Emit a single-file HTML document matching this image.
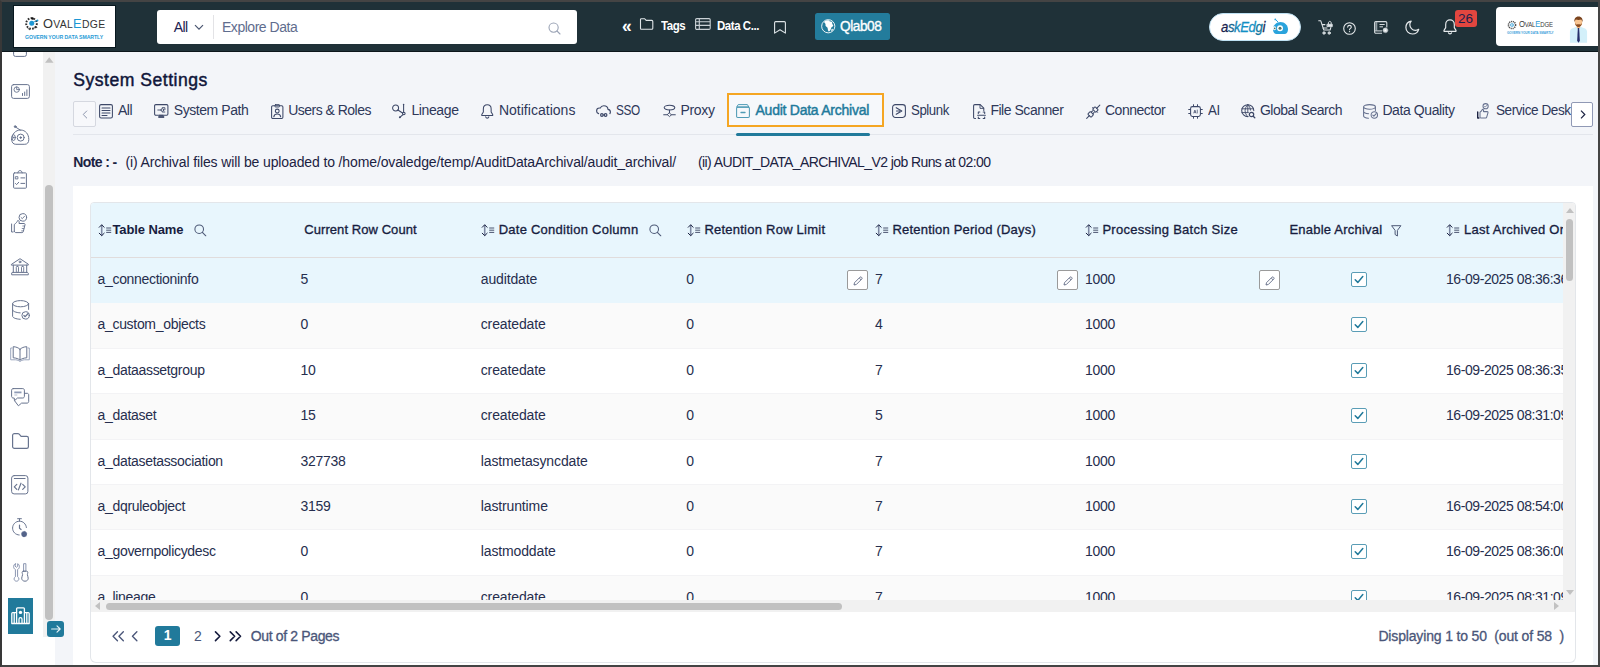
<!DOCTYPE html>
<html lang="en">
<head>
<meta charset="utf-8">
<title>System Settings - Audit Data Archival</title>
<style>
*{box-sizing:border-box;margin:0;padding:0}
html,body{width:1600px;height:667px;overflow:hidden}
body{position:relative;background:#f3f5f9;font-family:"Liberation Sans",sans-serif;color:#1b2242;font-size:13px}
svg{display:block;overflow:visible}
.abs{position:absolute}
.frame{position:absolute;left:0;top:0;width:1600px;height:667px;border:2px solid #444;border-left-color:#383838;z-index:50;pointer-events:none}
/* header */
.hdr{position:absolute;left:2px;top:2px;width:1596px;height:50px;background:#1f3138;border-bottom:1.5px solid #0c161b}
.logo{position:absolute;left:12px;top:4px;width:101px;height:41px;background:#fff;box-shadow:0 0 0 1px #07171e}
.search{position:absolute;left:155px;top:8px;width:420px;height:34px;background:#fff;border-radius:3px}
.hdr .t{position:absolute;white-space:nowrap;color:#fff}
.qlab{position:absolute;left:812.800px;top:11px;width:74.800px;height:27.300px;background:#237c9c;border-radius:2.500px}
.ask{position:absolute;left:1207px;top:11px;width:92px;height:27.600px;background:#fff;border-radius:14px;border:1px solid #bfe1f3}
.badge{position:absolute;left:1452.5px;top:8px;width:22px;height:17px;background:#e2463f;border-radius:3px;color:#1a1f4e;font-size:13.5px;text-align:center;line-height:17px}
.prof{position:absolute;left:1494px;top:5px;width:102px;height:39px;background:#fff;border-radius:4px 0 0 4px}
/* sidebar */
.side{position:absolute;left:2px;top:52px;width:53px;height:613px;background:#fff;overflow:hidden}
.sscroll{position:absolute;left:43px;top:52px;width:12px;height:585px;background:#f1f1f1}
.sthumb{position:absolute;left:2.200px;top:133px;width:7.800px;height:435px;background:#c1c1c1;border-radius:4px}
.sact{position:absolute;left:6px;top:545.5px;width:24.5px;height:36.5px;background:#217a9b}
.sarrow{position:absolute;left:47px;top:621px;width:16.5px;height:16px;background:#217a9b;border-radius:3px}
.ico{position:absolute}
/* main */
.h1{position:absolute;top:69px;font-size:17.600px;color:#10163a;white-space:nowrap;line-height:22px;-webkit-text-stroke:.45px #10163a}
.tabs{position:absolute;left:0;top:92px;width:1598px;height:44px}
.tab{position:absolute;top:10.250px;line-height:16px;font-size:14px;color:#2e3859;white-space:nowrap}
.tabbtn{position:absolute;width:22.5px;height:25.5px;border:1px solid #d5d8e0;border-radius:2px;background:#f7f8fb}
.note{position:absolute;top:154px;line-height:16px;font-size:14px;white-space:nowrap;color:#1b2242}
.card{position:absolute;left:73px;top:185.5px;width:1520px;height:490px;background:#fff}
.tbl{position:absolute;left:90px;top:202px;width:1486px;height:410.5px;border:1px solid #e3e6ea;border-radius:4px 4px 0 0;overflow:hidden;background:#fff}
.thead{position:absolute;left:0;top:0;width:1472px;height:54.5px;background:#e8f6fd;border-bottom:1px solid #e0dcdc}
.th{position:absolute;top:18.700px;line-height:16px;font-size:13px;font-weight:bold;color:#171d3f;white-space:nowrap}
.row{position:absolute;left:0;width:1472px;height:46px;border-bottom:1px solid #f3f3f5;background:#fff}
.row.alt{background:#fafafa}
.row.sel{background:#e8f6fd}
.row span{position:absolute;top:13.300px;line-height:16px;font-size:14px;letter-spacing:-.31px;color:#262e4e;white-space:nowrap}
.row.sel{border-bottom-color:#e8f6fd}
.row span.c3{letter-spacing:-.13px}.row span.dt{letter-spacing:-.43px}
.eb{position:absolute;top:12px;width:21px;height:20px;background:#fff;border:1px solid #9a9a9a;border-radius:2px}
.cb{position:absolute;left:1260px;top:14px;width:15.500px;height:15px;background:#fff;border:1.300px solid #5a9db6;border-radius:2px}
.pager{position:absolute;left:90px;top:612px;width:1486px;height:50.500px;border:1px solid #e3e6ea;border-top:none;border-radius:0 0 6px 6px;background:#fff}
.pg{position:absolute;top:16.200px;line-height:16px;font-size:14px;color:#4a5679;white-space:nowrap}
</style>
</head>
<body>
<!-- HEADER -->
<div class="hdr" id="hdr">
  <div class="logo">
    <svg class="abs" style="left:10.5px;top:9.5px" width="15" height="15" viewBox="0 0 30 30">
      <circle cx="13" cy="15" r="10.5" fill="none" stroke="#2b2b2b" stroke-width="4.2" stroke-dasharray="3.2 2.6"/>
      <circle cx="13" cy="15" r="8" fill="#fff"/>
      <path d="M5 24l5 4M21 20l3 3-7 1" stroke="#2b2b2b" stroke-width="1.6" fill="none"/>
      <circle cx="15" cy="5" r="2.4" fill="#111"/>
      <circle cx="13.5" cy="14.5" r="5" fill="#1c97d4"/>
      <path d="M17 12l7-3" stroke="#1c97d4" stroke-width="1.6"/>
      <circle cx="25" cy="9" r="1.8" fill="#1c97d4"/>
    </svg>
    <div class="abs" style="left:29px;top:9.800px;line-height:16px;white-space:nowrap;color:#333;font-size:10.400px;letter-spacing:.32px"><span style="font-size:12.800px">O</span>VAL<span style="font-size:12.800px;color:#1c97d4">E</span>DGE</div>
    <div class="abs fit" style="--x:11;--w:79;top:26.800px;line-height:8px;white-space:nowrap;color:#2a9bd6;font-size:5.200px;font-weight:bold;--c:1;left:11.00px;letter-spacing:-0.068px">GOVERN YOUR DATA SMARTLY</div>
  </div>
  <div class="search">
    <div class="abs fit" style="--x:16.700;--w:14.300;top:8.800px;line-height:16px;font-size:14px;color:#1b2050;--c:1;left:16.70px;letter-spacing:-0.574px">All</div>
    <svg class="abs" style="left:37px;top:14px" width="10" height="7" viewBox="0 0 10 7"><path d="M1 1.2l4 4 4-4" fill="none" stroke="#4a5570" stroke-width="1.2"/></svg>
    <div class="abs" style="left:55.5px;top:5px;width:1px;height:24px;background:#e3e3e6"></div>
    <div class="abs fit" style="--x:65.600;--w:75;top:8.800px;line-height:16px;font-size:14px;color:#5f6d8e;white-space:nowrap;--c:1;left:65.00px;letter-spacing:-0.468px">Explore Data</div>
    <svg class="abs" style="left:391px;top:12px" width="13" height="13" viewBox="0 0 13 13"><circle cx="5.6" cy="5.6" r="4.6" fill="none" stroke="#9aa3b5" stroke-width="1.1"/><path d="M9 9l3 3" stroke="#9aa3b5" stroke-width="1.1" stroke-linecap="round"/></svg>
  </div>
  <div class="t" style="left:620px;top:15.600px;font-size:17.500px;font-weight:bold;line-height:16px">«</div>
  <svg class="abs" style="left:637.5px;top:16px" width="14" height="12" viewBox="0 0 14 12"><path d="M1.2 0.7h3.4l1.6 1.7h5.6c.6 0 1 .4 1 1v6.9c0 .6-.4 1-1 1H1.2c-.4 0-.7-.3-.7-.7V1.400c0-.4.3-.7.7-.7z" fill="none" stroke="#dfe5e8" stroke-width="1.1"/></svg>
  <div class="t fit" style="--x:659;--w:25;top:16.800px;font-size:12px;font-weight:bold;line-height:14px;--c:1;left:659.00px;letter-spacing:-0.450px;transform:scaleX(0.9581);transform-origin:0 0">Tags</div>
  <svg class="abs" style="left:692.5px;top:16px" width="16" height="12" viewBox="0 0 16 12"><rect x=".6" y=".6" width="14.6" height="10.8" rx="1.2" fill="none" stroke="#c9d1d5" stroke-width="1.1"/><path d="M.6 3.700h14.600M.6 7.400h14.600M4.300 .6v10.800" stroke="#c9d1d5" stroke-width="1.1" fill="none"/></svg>
  <div class="t fit" style="--x:715;--w:42;top:16.800px;font-size:12px;font-weight:bold;line-height:14px;--c:1;left:715.00px;letter-spacing:-0.450px;transform:scaleX(0.9529);transform-origin:0 0">Data C...</div>
  <svg class="abs" style="left:772px;top:19px" width="12" height="13" viewBox="0 0 12 13"><path d="M1.7.6h8.600c.6 0 1.100.5 1.100 1.100v10.400L6 8.800.6 12.100V1.700C.6 1.100 1.100.6 1.700.6z" fill="none" stroke="#dfe5e8" stroke-width="1.100" stroke-linejoin="round"/></svg>
  <div class="qlab">
    <svg class="abs" style="left:6px;top:5.500px" width="14.500" height="14.500" viewBox="0 0 14.500 14.500"><circle cx="7.250" cy="7.250" r="6.600" fill="none" stroke="#fff" stroke-width=".9"/><path d="M3.600 2.300c1.300-.9 3-1.200 4.600-.9.500.3.300.9.900 1.200.7.300 1.500-.1 2 .5.400.6-.1 1.300.2 2 .3.600 1 .9.900 1.600-.2.900-1.300 1-1.800 1.700-.6.800-.4 1.900-1 2.700-.4.600-.9 1.300-1.500 1.300-.7 0-.8-.9-1-1.600-.2-.8-.1-1.600-.5-2.300-.4-.7-1.300-.9-1.700-1.600-.4-.700 0-1.500-.3-2.200-.3-.6-1-.8-1.200-1.400.1-.4.200-.7.400-1z" fill="#fff"/><path d="M10.900 9.800c.5-.2 1 .1 1 .600-.2.800-.7 1.500-1.300 2-.3-.3-.4-.8-.3-1.300.1-.5.200-1.100.6-1.300z" fill="#fff"/></svg>
    <div class="t fit" style="--x:25.500;--w:42;top:5.300px;font-size:14px;line-height:16px;-webkit-text-stroke:.35px #fff;--c:1;left:25.50px;letter-spacing:-0.450px;transform:scaleX(0.9743);transform-origin:0 0">Qlab08</div>
  </div>
  <div class="ask">
    <div class="abs fit" style="--x:10.600;--w:45;top:5px;font-size:14.500px;line-height:16px;font-style:italic;white-space:nowrap;-webkit-text-stroke:.3px currentColor;--c:1;left:10.60px;letter-spacing:-0.450px;transform:scaleX(0.9061);transform-origin:0 0"><span style="color:#1a1f4e">a</span><span style="color:#17668f">s</span><span style="color:#1485b5">k</span><span style="color:#1290c4">Ed</span><span style="color:#14789f">g</span><span style="color:#1d2a55">i</span></div>
    <svg class="abs" style="left:62px;top:3.500px" width="17" height="17" viewBox="0 0 17 17"><path d="M3.500 1.500l2.500 2.500" stroke="#2aa3dc" stroke-width="1" fill="none"/><circle cx="3.300" cy="1.400" r=".9" fill="#2aa3dc"/><path d="M1 11.500C1 7.400 4.300 4 8.500 4S16 7.400 16 11.500c0 2.500-1.500 4.500-3.500 4.500h-8C2.500 16 1 14 1 11.500z" fill="#2aa3dc"/><circle cx="8" cy="10.300" r="3" fill="#fff"/><circle cx="8" cy="10.300" r="1.500" fill="#4f7368"/><ellipse cx="2.500" cy="10.300" rx="1.600" ry="2" fill="#fff"/><circle cx="2.700" cy="10.300" r=".9" fill="#4f7368"/></svg>
  </div>
  <svg class="abs" style="left:1315.500px;top:18.200px" width="15" height="15" viewBox="0 0 15 15" fill="none" stroke="#dfe5e8" stroke-width="1.050" stroke-linecap="round" stroke-linejoin="round"><path d="M.7.800h2.100l3 9.200h6.300l.800-2.600"/><path d="M4.300 4.600h2.600" /><path d="M5 8h4"/><circle cx="6" cy="13" r="1.200" fill="#aeb8bd" stroke-width=".9"/><circle cx="11.200" cy="13" r="1.200" fill="#aeb8bd" stroke-width=".9"/><path d="M9.300 4.300h5v2.300h-5z" fill="#dfe5e8" stroke-width=".8"/><path d="M10.400 4.100V3c0-.9.600-1.600 1.400-1.600s1.400.7 1.400 1.600v1.100" stroke-width="1"/></svg>
  <svg class="abs" style="left:1340.500px;top:19.500px" width="13" height="13" viewBox="0 0 13 13"><circle cx="6.500" cy="6.500" r="5.800" fill="none" stroke="#e6eaec" stroke-width="1.100"/><path d="M4.700 5.100c0-1 .8-1.700 1.800-1.700s1.800.7 1.800 1.600c0 1.300-1.800 1.400-1.800 2.800" fill="none" stroke="#e6eaec" stroke-width="1.100" stroke-linecap="round"/><circle cx="6.500" cy="9.600" r=".7" fill="#e6eaec"/></svg>
  <svg class="abs" style="left:1372.400px;top:19.300px" width="15" height="14" viewBox="0 0 15 14" fill="none" stroke="#d5dbde" stroke-width="1.100" stroke-linejoin="round"><path d="M8 12.300H1.800c-.7 0-1.200-.5-1.200-1.200V1.800C.6 1.100 1.100.6 1.800.6h9.800c.7 0 1.200.5 1.200 1.200v4.700"/><path d="M2.300 1v8.600" stroke="#8f9ba1" stroke-width="2"/><path d="M.8 9.900h7.200M5.500 3.500h5.200M5.500 5.800h3.500" stroke-width="1"/><circle cx="11.400" cy="9.300" r="2.500" fill="#d5dbde" stroke="#9aa5aa" stroke-width=".8" stroke-dasharray="1 .8"/><circle cx="11.400" cy="9.300" r=".9" fill="#fff" stroke="none"/></svg>
  <svg class="abs" style="left:1403px;top:18px" width="15" height="15" viewBox="0 0 15 15"><path d="M6.200 1.100C3.200 1.700.9 4.300.9 7.500c0 3.600 2.900 6.500 6.500 6.500 3 0 5.500-2 6.300-4.700-.9.600-2 1-3.200 1-3.200 0-5.700-2.600-5.700-5.700 0-1.300.5-2.500 1.400-3.500z" fill="none" stroke="#e6eaec" stroke-width="1.200" stroke-linejoin="round"/></svg>
  <svg class="abs" style="left:1440.500px;top:17px" width="14" height="16" viewBox="0 0 14 16"><path d="M7 .9c-2.500 0-4.300 2-4.300 4.500v3.200L1 11.400v.9h12v-.9l-1.700-2.800V5.400C11.300 2.900 9.500.9 7 .9z" fill="none" stroke="#e6eaec" stroke-width="1.150" stroke-linejoin="round"/><path d="M5.300 13.300c.2.900.9 1.500 1.700 1.500s1.500-.6 1.700-1.500" fill="none" stroke="#e6eaec" stroke-width="1.150"/></svg>
  <div class="badge">26</div>
  <div class="prof">
    <svg class="abs" style="left:10.500px;top:12.500px" width="10" height="10" viewBox="0 0 30 30">
      <circle cx="15" cy="15" r="10.500" fill="none" stroke="#4a4a4a" stroke-width="5" stroke-dasharray="3.200 2.400"/>
      <circle cx="15" cy="15" r="7.500" fill="#fff"/><circle cx="15" cy="15" r="5.500" fill="#2f9dd6"/><path d="M13 11.500l5.500 3.500-5.500 3.500z" fill="#fff"/>
    </svg>
    <div class="abs" style="left:23px;top:10.500px;line-height:12px;white-space:nowrap;color:#3a3a3a;font-size:7.600px;letter-spacing:-.2px;transform:scaleX(.79);transform-origin:0 0"><span style="font-size:9.800px">O</span>VAL<span style="font-size:9.800px;color:#2f9dd6">E</span>DGE</div>
    <div class="abs" style="left:11px;top:23.800px;font-size:3.100px;line-height:4px;font-weight:bold;color:#3fa3db;white-space:nowrap;letter-spacing:-.04px">GOVERN YOUR DATA SMARTLY</div>
    <svg class="abs" style="left:71.500px;top:8.500px" width="21" height="26.700" viewBox="0 0 22 28">
      <path d="M2 28V16.500c0-2.200 1.500-3.500 3.500-4L9 11.300h4l3.500 1.200c2 .5 3.500 1.800 3.500 4V28z" fill="#d3f0fa"/>
      <path d="M9.300 9h3.400v3.300L11 13.600 9.300 12.300z" fill="#f3b681"/>
      <path d="M10.300 12.500h1.400l.7 13.500-1.400 2-1.400-2z" fill="#27306b"/>
      <ellipse cx="11" cy="6.300" rx="3.900" ry="4.500" fill="#f8c592"/>
      <path d="M6.700 6.300C6.300 3 7.800.5 11 .5s4.700 2.500 4.300 5.800c-.5-1.200-1-2.200-1.500-2.700-1.600.7-4.200.6-5.500 0-.6.500-1.100 1.500-1.600 2.700z" fill="#7a431d"/>
      <path d="M7.200 6.500c.2 3 1.700 5 3.800 5s3.600-2 3.800-5c-.4 1.600-1.200 2.400-2 2.500-.8-.4-2.800-.4-3.600 0-.8-.1-1.600-.9-2-2.500z" fill="#8a4d22"/>
    </svg>
  </div>
</div>
<!-- SIDEBAR -->
<div class="side" id="side">
<svg class="ico" style="left:11px;top:-5px" width="14" height="10" viewBox="0 0 14 10" fill="none" stroke="#68748f" stroke-width="1" stroke-linecap="round" stroke-linejoin="round"><rect x=".6" y="-4" width="12.800" height="13.400" rx="1.800"/></svg>
<svg class="ico" style="left:8.5px;top:32px" width="19" height="15" viewBox="0 0 19 15" fill="none" stroke="#68748f" stroke-width="1" stroke-linecap="round" stroke-linejoin="round"><rect x=".6" y=".6" width="17.800" height="13.800" rx="2"/><circle cx="5.700" cy="5.600" r="2.700" stroke-width=".9"/><path d="M5.700 2.900v2.700h2.700" stroke-width=".9"/><path d="M11.500 11.500v-2M13.700 11.500V8M15.900 11.500V5.800" stroke-width="1"/></svg>
<svg class="ico" style="left:9px;top:73px" width="19" height="20" viewBox="0 0 19 20" fill="none" stroke="#68748f" stroke-width="1" stroke-linecap="round" stroke-linejoin="round"><circle cx="4.200" cy="1.600" r=".9" fill="#68748f"/><path d="M4.800 2.200l4.700 3"/><path d="M.7 14.500C.7 9.200 4.500 5 9.500 5s8.300 4.200 8.300 9.500c0 3-1.500 4.800-4 4.800h-9C2.200 19.300.7 17.500.7 14.500z"/><circle cx="9.700" cy="12.600" r="3.500"/><circle cx="9.700" cy="12.600" r=".8" fill="#68748f"/><ellipse cx="2.600" cy="12.600" rx="1.700" ry="2.900"/><circle cx="2.500" cy="12.600" r=".4" fill="#68748f"/></svg>
<svg class="ico" style="left:11px;top:117.5px" width="14" height="19" viewBox="0 0 14 19" fill="none" stroke="#68748f" stroke-width="1" stroke-linecap="round" stroke-linejoin="round"><rect x=".6" y="2.900" width="12.800" height="15.300" rx=".8"/><path d="M4.800 2.900c0-1.300 1-2.300 2.200-2.300s2.200 1 2.200 2.300" /><rect x="2.700" y="6.700" width="2.200" height="2.200" stroke-width=".9"/><path d="M7.900 7.900h3.800M7.900 13.400h3.800M2.500 13.500l1.100 1.100 2.100-2.300" stroke-width="1"/></svg>
<svg class="ico" style="left:9px;top:160.5px" width="17" height="20.5" viewBox="0 0 17 20.5" fill="none" stroke="#68748f" stroke-width="1" stroke-linecap="round" stroke-linejoin="round"><circle cx="11.800" cy="4.400" r="3.800"/><path d="M10.100 4.500l1.200 1.200 2.200-2.400" stroke-width=".9"/><path d="M.6 11v8h1.400M3.300 18.300v-6.800c1.500-1 2.800-2.500 3.400-4 .9 0 1.500.6 1.500 1.500l-.2 1.500h5c.8 0 1.200.6 1 1.300l-1.700 6.800c-.2.700-.7 1-1.400 1H5c-.8 0-1.700-.5-1.700-1.300z"/><path d="M13.300 13h-1.500M12.700 15.500h-1.500M12.100 17.900h-1.500" stroke-width=".8"/></svg>
<svg class="ico" style="left:9px;top:205.5px" width="18" height="17.5" viewBox="0 0 18 17.5" fill="none" stroke="#68748f" stroke-width="1" stroke-linecap="round" stroke-linejoin="round"><path d="M.7 6.200L9 .7l8.300 5.500v.9H.7z"/><circle cx="9" cy="3.900" r=".9"/><path d="M2.300 7.100v7.300M15.700 7.100v7.300"/><rect x="5.300" y="8.300" width="2.200" height="6" rx="1" stroke-width=".9"/><rect x="10.500" y="8.300" width="2.200" height="6" rx="1" stroke-width=".9"/><path d="M1.500 14.400h15l.8 1v1.400H.7v-1.400z"/></svg>
<svg class="ico" style="left:9.5px;top:248px" width="18.5" height="20" viewBox="0 0 18.5 20" fill="none" stroke="#68748f" stroke-width="1" stroke-linecap="round" stroke-linejoin="round"><ellipse cx="8.600" cy="3.700" rx="8" ry="3.100"/><path d="M.6 3.700v12.500c0 1.500 3 2.800 7.600 3.100M16.600 3.700v5.700M.6 10c0 1.300 3 2.500 7.600 2.900"/><circle cx="13.600" cy="15.400" r="3.700"/><path d="M11.900 15.500l1.300 1.200 2.900-3.200" stroke-width="1.200"/></svg>
<svg class="ico" style="left:8px;top:293.5px" width="20" height="16.5" viewBox="0 0 20 16.5" fill="none" stroke="#68748f" stroke-width="1" stroke-linecap="round" stroke-linejoin="round"><path d="M10 3.300C8.500 1.700 6 .8 3.200.7v11.100c2.800.1 5.300 1 6.800 2.300 1.500-1.300 4-2.200 6.800-2.300V.7C14 .8 11.500 1.700 10 3.300zM10 3.300v10.800"/><path d="M1.900 2H.7v11.800h5c1.800.1 3.300.8 4.300 1.900 1-1.100 2.500-1.800 4.300-1.900h5V2h-1.200" stroke="#9aa5bd"/></svg>
<svg class="ico" style="left:9px;top:336px" width="18.5" height="18.5" viewBox="0 0 18.5 18.5" fill="none" stroke="#68748f" stroke-width="1" stroke-linecap="round" stroke-linejoin="round"><path d="M2.200.6h9.600c.9 0 1.600.7 1.600 1.600v6.200c0 .9-.7 1.600-1.600 1.600H6.500L3.500 12.700 3.200 10H2.200C1.300 10 .6 9.300.6 8.400V2.200C.6 1.300 1.300.6 2.200.6z"/><path d="M13.400 5.300h2.700c.9 0 1.600.7 1.600 1.600v6.600c0 .9-.7 1.600-1.600 1.600h-5.500l-3.200 2.700-3.700-4.900"/><path d="M3.300 4.400h7.200" stroke-width="1.800" stroke="#8e9ab5" stroke-linecap="butt"/><path d="M3.300 7h3" stroke="#b5bdcf" stroke-linecap="butt"/></svg>
<svg class="ico" style="left:9.5px;top:381px" width="17" height="16" viewBox="0 0 17 16" fill="none" stroke="#68748f" stroke-width="1" stroke-linecap="round" stroke-linejoin="round"><path d="M2.400.6h3.500c.5 0 .9.200 1.300.6l1.900 2.100h5.600c.9 0 1.700.8 1.700 1.700v8.700c0 .9-.8 1.700-1.700 1.700H2.400c-1 0-1.800-.8-1.800-1.700V2.300C.6 1.400 1.400.6 2.400.6z" stroke-width="1.200"/></svg>
<svg class="ico" style="left:9px;top:423px" width="17.5" height="19.5" viewBox="0 0 17.5 19.5" fill="none" stroke="#68748f" stroke-width="1" stroke-linecap="round" stroke-linejoin="round"><rect x=".6" y=".6" width="16.300" height="18.300" rx="2.500"/><path d="M3.300 3.500h10.800"/><path d="M5.800 9.300l-2.500 2.500 2.500 2.500M11.700 9.300l2.500 2.500-2.500 2.500M10 8.200l-2.600 6.700" stroke-width="1.200"/></svg>
<svg class="ico" style="left:9.5px;top:466px" width="16.5" height="19" viewBox="0 0 16.5 19" fill="none" stroke="#68748f" stroke-width="1" stroke-linecap="round" stroke-linejoin="round"><path d="M5.600.7h3.800M7.500.9v2.300" /><path d="M7.200 17c-3.700-.1-6.600-3.200-6.600-6.900 0-3.800 3.100-6.900 6.900-6.900 3.600 0 6.600 2.800 6.900 6.300"/><path d="M7.500 7v3.300l1.600 1.200" stroke-width="1.200"/><g transform="translate(12.300 15.500) scale(.78) translate(-12.300 -15.500)"><path d="M12.300 12l.6 1 1.100-.4.300 1.200 1.200.1-.3 1.200 1 .7-.8.900.6 1.100-1.100.4v1.200l-1.200-.1-.6 1-1-.7-1 .7-.600-1-1.200.1v-1.200l-1.100-.4.600-1.100-.8-.9 1-.7-.3-1.200 1.200-.1.300-1.200 1.100.4z" fill="#536389" stroke="none"/></g></svg>
<svg class="ico" style="left:10.5px;top:511px" width="16" height="18.5" viewBox="0 0 16 18.5" fill="none" stroke="#68748f" stroke-width="1" stroke-linecap="round" stroke-linejoin="round"><path d="M2.300.7C1.200 1.300.6 2.400.6 3.600c0 1.300.7 2.400 1.800 2.900v7.300c-.8.400-1.300 1.200-1.300 2.100 0 1.300 1.100 2.300 2.400 2.300s2.400-1 2.400-2.300c0-.9-.5-1.700-1.300-2.100V6.500c1.100-.5 1.800-1.600 1.800-2.900 0-1.200-.6-2.300-1.700-2.900v2.600L3.500 4.300 2.300 3.300z" stroke="#8b96b1"/><path d="M11 .7h1.900v7.500H11z" stroke="#8b96b1"/><path d="M10.300 8.200h3.300c.7 0 1.200.5 1.200 1.200 0 .9-.4 1.300-.4 2.200 0 1.300.8 2 .8 3.600 0 1.700-1.200 3-3.200 3s-3.300-1.300-3.300-3c0-1.600.9-2.300.9-3.600 0-.9-.5-1.300-.5-2.200 0-.7.500-1.200 1.200-1.200z"/></svg>
<div class="sact"><svg class="abs" style="left:3px;top:9px" width="19" height="18" viewBox="0 0 19 18" fill="none" stroke="#fff" stroke-width="1.300" stroke-linejoin="round"><path d="M5.600 16.500V1.700c0-.5.400-.9.900-.9h6c.5 0 .9.400.9.900v14.800"/><path d="M5.600 5.600H1.700c-.5 0-.9.400-.9.900v10h17.400v-10c0-.5-.4-.9-.9-.9h-3.900M3.200 5.600v10.900M15.800 5.600v10.900M.800 16.700h17.400"/><circle cx="9.500" cy="5.400" r="1.700" fill="#fff" stroke="none"/><path d="M8 16.500v-4.300c0-.8.700-1.500 1.500-1.500s1.500.7 1.500 1.500v4.300"/></svg></div>
</div>
<div class="sscroll"><svg class="abs" style="left:2px;top:4.500px" width="8.500" height="6" viewBox="0 0 8 5"><path d="M0 5L4 0l4 5z" fill="#c1c1c1"/></svg><div class="sthumb"></div></div>
<div class="sarrow"><svg class="abs" style="left:3.500px;top:4px" width="10" height="8" viewBox="0 0 10 8" fill="none" stroke="#e8f3f7" stroke-width="1.100" stroke-linecap="round" stroke-linejoin="round"><path d="M.6 4h8.600M6 .8l3.200 3.200L6 7.200"/></svg></div>
<!-- MAIN -->
<div class="h1 fit" style="--x:73.250;--w:134.250;--c:1;left:73.25px;letter-spacing:0.495px">System Settings</div>
<div class="tabs" id="tabs">
<div class="tabbtn" style="left:73px;top:9.250px"><svg class="abs" style="left:7.500px;top:7.500px" width="6" height="9" viewBox="0 0 6 9" fill="none" stroke="#8d96ad" stroke-width="1"><path d="M5 .7L1.200 4.500 5 8.300"/></svg></div>
<svg class="abs" style="left:98.75px;top:11.75px" width="14" height="14.5" viewBox="0 0 14 14.5" fill="none" stroke="#3d4868" stroke-width="1.05" stroke-linecap="round" stroke-linejoin="round"><rect x=".6" y=".6" width="12.800" height="13.300" rx="1.500"/><path d="M3 4h8M3 6.500h8M3 9h8M3 11.400h5"/></svg><div class="tab fit" style="--x:118;--w:14.5;--c:1;left:118.00px;letter-spacing:-0.474px">All</div>
<svg class="abs" style="left:153.75px;top:12px" width="14.5" height="14" viewBox="0 0 14.5 14" fill="none" stroke="#3d4868" stroke-width="1.05" stroke-linecap="round" stroke-linejoin="round"><rect x=".6" y=".6" width="13.300" height="10.600" rx="1.200"/><path d="M4.300 13h5.900" stroke-width="1.800" stroke-linecap="butt"/><path d="M5.500 11.300h3.500" stroke-width="1"/><path d="M3.800 6h3.600M8.300 3.700h2.600v2M8.500 8h2.300" stroke-width=".9"/><circle cx="8.300" cy="6" r="1.400" stroke-width=".9"/></svg><div class="tab fit" style="--x:173.75;--w:74.25;--c:1;left:173.75px;letter-spacing:-0.433px">System Path</div>
<svg class="abs" style="left:270.75px;top:11.5px" width="12.5" height="15" viewBox="0 0 12.5 15" fill="none" stroke="#3d4868" stroke-width="1.05" stroke-linecap="round" stroke-linejoin="round"><rect x=".6" y="1.800" width="11.300" height="12.600" rx="1.200"/><rect x="4" y=".6" width="4.500" height="2.400" rx=".5" stroke-width=".9"/><circle cx="6.250" cy="7" r="1.900"/><path d="M2.800 12.800c.3-1.800 1.700-2.800 3.450-2.800s3.150 1 3.450 2.800"/></svg><div class="tab fit" style="--x:288.75;--w:82.25;--c:1;left:288.15px;letter-spacing:-0.518px">Users &amp; Roles</div>
<svg class="abs" style="left:392px;top:11px" width="15" height="15.5" viewBox="0 0 15 15.5" fill="none" stroke="#3d4868" stroke-width="1.05" stroke-linecap="round" stroke-linejoin="round"><circle cx="3.600" cy="5" r="3"/><path d="M5.900 7l4.700 3"/><path d="M11.600 2v7.200"/><circle cx="11.600" cy="1.500" r=".8" fill="#3d4868" stroke="none"/><circle cx="11.800" cy="10.500" r="1.300"/><path d="M11 11.600l-2.600 2.300"/><circle cx="7.900" cy="14.300" r="1" fill="#3d4868" stroke="none"/></svg><div class="tab fit" style="--x:412;--w:46.75;--c:1;left:411.40px;letter-spacing:-0.382px">Lineage</div>
<svg class="abs" style="left:481px;top:11.5px" width="12.5" height="15" viewBox="0 0 12.5 15" fill="none" stroke="#3d4868" stroke-width="1.05" stroke-linecap="round" stroke-linejoin="round"><path d="M6.250.8c-2.300 0-3.900 1.800-3.900 4.100v3L.8 10.600v.8h10.900v-.8l-1.550-2.700v-3c0-2.300-1.600-4.100-3.900-4.100z"/><path d="M4.700 12.800c.2.800.8 1.300 1.550 1.300s1.350-.5 1.550-1.300"/></svg><div class="tab fit" style="--x:499.5;--w:75.5;--c:1;left:498.90px;letter-spacing:0.020px">Notifications</div>
<svg class="abs" style="left:596px;top:13px" width="15" height="12.5" viewBox="0 0 15 12.5" fill="none" stroke="#3d4868" stroke-width="1.05" stroke-linecap="round" stroke-linejoin="round"><path d="M2.600 8.600C1.400 8.200.6 7.100.6 5.900c0-1.600 1.300-2.900 2.900-2.900.2 0 .5 0 .7.100C4.800 1.600 6.200.7 7.800.7c2.200 0 4 1.600 4.200 3.700 1.400.2 2.400 1.300 2.400 2.700 0 .6-.2 1.100-.5 1.500" stroke-width="1.150"/><circle cx="5.900" cy="10" r="1.300" stroke-width="1.200"/><circle cx="9.600" cy="10" r="1.300" stroke-width="1.200"/><path d="M7.200 10h1.100" stroke-width="1.200"/></svg><div class="tab fit" style="--x:615.75;--w:24.25;--c:1;left:615.75px;letter-spacing:-0.450px;transform:scaleX(0.8427);transform-origin:0 0">SSO</div>
<svg class="abs" style="left:663px;top:12px" width="13" height="14.5" viewBox="0 0 13 14.5" fill="none" stroke="#3d4868" stroke-width="1.05" stroke-linecap="round" stroke-linejoin="round"><ellipse cx="6.500" cy="3.600" rx="5.300" ry="2.400"/><path d="M6.500 6v2.800M.7 10.800h3.800M8.500 10.800h3.800"/><path d="M6.500 9l1.900 1.800-1.900 1.800-1.900-1.800z" stroke-width=".9"/></svg><div class="tab fit" style="--x:681;--w:33.5;--c:1;left:680.40px;letter-spacing:-0.322px">Proxy</div>
<div class="abs" style="left:727px;top:1px;width:156.500px;height:34px;border:2px solid #f5a623;background:#f6f8fb"></div>
<svg class="abs" style="left:736.25px;top:11.75px" width="14" height="14" viewBox="0 0 14 14" fill="none" stroke="#4f9bb5" stroke-width="1.05" stroke-linecap="round" stroke-linejoin="round"><path d="M2.600.6h8.800l1.500 2.500H1.100z" stroke-width="1"/><path d="M.6 4.300c0-.7.500-1.200 1.200-1.200h10.400c.7 0 1.200.5 1.200 1.200v7.900c0 .7-.5 1.200-1.200 1.200H1.800c-.7 0-1.200-.5-1.200-1.200z"/><path d="M5 8.500h4" stroke-width="1.300"/></svg><div class="tab fit" style="--x:755.5;--w:114.5;color:#217a9b;-webkit-text-stroke:.45px #217a9b;--c:1;left:755.50px;letter-spacing:-0.247px">Audit Data Archival</div>
<div class="abs" style="left:736px;top:40.500px;width:134px;height:3px;background:#217a9b;border-radius:2px;z-index:2"></div>
<svg class="abs" style="left:892px;top:12px" width="14" height="14" viewBox="0 0 14 14" fill="none" stroke="#3d4868" stroke-width="1.05" stroke-linecap="round" stroke-linejoin="round"><rect x=".6" y=".6" width="12.800" height="12.800" rx="2.800"/><path d="M4.200 3.700l5.600 3.300-5.600 3.300M4.500 7h3" stroke-width="1.100"/></svg><div class="tab fit" style="--x:910.75;--w:39.25;--c:1;left:910.75px;letter-spacing:-0.450px;transform:scaleX(0.9445);transform-origin:0 0">Splunk</div>
<svg class="abs" style="left:973px;top:11.5px" width="12.5" height="15" viewBox="0 0 12.5 15" fill="none" stroke="#3d4868" stroke-width="1.05" stroke-linecap="round" stroke-linejoin="round"><path d="M2.600 14.400H1.800c-.7 0-1.200-.5-1.200-1.200V1.800C.6 1.100 1.100.6 1.800.6h5.400l3.600 3.600v2.300"/><path d="M7 .8v3.600h3.600" stroke-width=".9"/><path d="M5.300 9.400V8h1.500M11.700 9.400V8h-1.500M5.300 13v1.400h1.500M11.700 13v1.400h-1.500M4.600 11.200h7.800" stroke-width="1.050"/></svg><div class="tab fit" style="--x:991;--w:72.75;--c:1;left:990.40px;letter-spacing:-0.471px">File Scanner</div>
<svg class="abs" style="left:1085.75px;top:11.5px" width="14.5" height="15" viewBox="0 0 14.5 15" fill="none" stroke="#3d4868" stroke-width="1.05" stroke-linecap="round" stroke-linejoin="round"><g transform="translate(7.250 7.750) rotate(-45)"><path d="M-9.300 0h3.800M4.800 0h4.500"/><rect x="-5.500" y="-2.300" width="3.700" height="4.600" rx=".7"/><path d="M-1.800 -1.100h2M-1.800 1.100h2"/><rect x="1.300" y="-2.300" width="3.500" height="4.600" rx=".7"/><path d="M2.600 -2.300v-1.200M2.600 2.300v1.200" stroke-width=".9"/></g></svg><div class="tab fit" style="--x:1105;--w:61;--c:1;left:1105.00px;letter-spacing:-0.491px">Connector</div>
<svg class="abs" style="left:1187.5px;top:11.5px" width="15" height="15" viewBox="0 0 15 15" fill="none" stroke="#3d4868" stroke-width="1.05" stroke-linecap="round" stroke-linejoin="round"><rect x="2.600" y="2.600" width="9.800" height="9.800" rx="1.800"/><path d="M5.500.7v1.900M9.500.7v1.900M5.500 12.400v1.900M9.500 12.400v1.900M.7 5.500h1.900M.7 9.500h1.900M12.400 5.500h1.900M12.400 9.500h1.900" stroke-width="1"/><path d="M5.900 9l1-3 1 3M6.200 8.200h1.400M9.300 6v3" stroke-width=".7"/></svg><div class="tab fit" style="--x:1207.5;--w:11.25;--c:1;left:1207.50px;letter-spacing:-0.450px;transform:scaleX(0.9463);transform-origin:0 0">AI</div>
<svg class="abs" style="left:1240.5px;top:12px" width="14.5" height="14.5" viewBox="0 0 14.5 14.5" fill="none" stroke="#3d4868" stroke-width="1.05" stroke-linecap="round" stroke-linejoin="round"><path d="M7 12.600C3.500 12.600.7 9.900.7 6.600S3.500.7 6.800.7c3.300 0 6 2.600 6 5.900"/><path d="M.9 4.800h11.700M.9 8.600h6.500M6.800.7c-1.700 1.500-2.700 3.600-2.700 5.900s1 4.500 2.700 6M6.800.7c1.600 1.400 2.600 3.300 2.700 5.400M6.800.7v7.500" stroke-width=".9"/><circle cx="10.500" cy="10.500" r="2.200" stroke-width="1.200"/><path d="M12.200 12.200l1.600 1.600" stroke-width="1.300"/></svg><div class="tab fit" style="--x:1260;--w:81.75;--c:1;left:1260.00px;letter-spacing:-0.515px">Global Search</div>
<svg class="abs" style="left:1363px;top:11.5px" width="15.5" height="15" viewBox="0 0 15.5 15" fill="none" stroke="#66718f" stroke-width="1.05" stroke-linecap="round" stroke-linejoin="round"><ellipse cx="6.500" cy="2.900" rx="5.900" ry="2.300"/><path d="M.6 2.900v9c0 1.100 2 2 4.900 2.300M12.400 2.900v3.700M.6 7.400c0 1.100 2 2 5 2.300"/><circle cx="11.300" cy="11" r="3.200"/><path d="M9.800 11.100l1.100 1.100 2.300-2.600" stroke-width="1.100"/></svg><div class="tab fit" style="--x:1383;--w:71.5;--c:1;left:1382.40px;letter-spacing:-0.412px">Data Quality</div>
<svg class="abs" style="left:1477px;top:11px" width="12.5" height="15.5" viewBox="0 0 12.5 15.5" fill="none" stroke="#66718f" stroke-width="1.05" stroke-linecap="round" stroke-linejoin="round"><circle cx="8.600" cy="3.200" r="2.600"/><path d="M7.500 3.300l.8.800 1.500-1.700" stroke-width=".8"/><path d="M.7 9v6h1.200" stroke="#1b2242" stroke-width="1.400"/><path d="M3 14.200V9.300c1.100-.7 2-1.800 2.500-3 .7 0 1.100.500 1.100 1.100L6.500 8.600h3.700c.6 0 .9.500.8 1l-1.300 4.500c-.1.500-.500.800-1 .8H4.300c-.6 0-1.300-.4-1.300-.700z"/></svg><div class="tab fit" style="--x:1495.5;--w:76;--c:1;left:1495.50px;letter-spacing:-0.450px;transform:scaleX(0.9679);transform-origin:0 0">Service Desk</div>
<div class="tabbtn" style="left:1571px;top:9.500px;width:22px;height:25px;background:#fff;border-color:#9099b5;z-index:3"><svg class="abs" style="left:8px;top:7.500px" width="6" height="9" viewBox="0 0 6 9" fill="none" stroke="#1b2242" stroke-width="1.200"><path d="M1 .7l3.800 3.800L1 8.300"/></svg></div>
<div class="abs" style="left:73px;top:41.500px;width:1520px;height:1px;background:#e3e6ec"></div>
</div>
<div class="note fit" style="--x:73.250;font-weight:bold;--w:44.250;--c:1;left:73.25px;letter-spacing:-0.615px">Note : -</div>
<div class="note fit" style="--x:125.500;--w:551.500;--c:1;left:125.50px;letter-spacing:-0.123px">(i) Archival files will be uploaded to /home/ovaledge/temp/AuditDataArchival/audit_archival/</div>
<div class="note fit" style="--x:698;--w:294;--c:1;left:698.00px;letter-spacing:-0.591px">(ii) AUDIT_DATA_ARCHIVAL_V2 job Runs at 02:00</div>
<div class="card"></div>
<div class="tbl" id="tbl">
<div class="thead"><svg class="abs" style="left:7px;top:21px" width="13.500" height="12.500" viewBox="0 0 13.500 12.500" fill="none" stroke="#1d2444" stroke-width="1" stroke-linecap="round" stroke-linejoin="round"><path d="M3.700 1.200v10.100" stroke="#7d88a3" stroke-width="1.600"/><path d="M1.200 3.300L3.700.8l2.500 2.500M1.200 9.200l2.500 2.500 2.500-2.500"/><path d="M8.200 4h5M8.200 6.200h5M8.200 8.400h5" stroke-width=".9" stroke-linecap="butt" stroke="#39425f"/></svg>
<div class="th fit" style="--x:21.5;--w:70.75;--c:1;left:21.50px;letter-spacing:-0.114px">Table Name</div>
<svg class="abs" style="left:103.25px;top:21px" width="12.500" height="12.500" viewBox="0 0 12.500 12.500" fill="none" stroke="#4c5876" stroke-width="1.050" stroke-linecap="round"><circle cx="5.200" cy="5.200" r="4.300"/><path d="M8.400 8.400l3.400 3.400"/></svg>
<div class="th fit" style="--x:213.25;--w:112.75;font-weight:normal;-webkit-text-stroke:.32px #171d3f;--c:1;left:213.25px;letter-spacing:0.068px">Current Row Count</div>
<svg class="abs" style="left:389.75px;top:21px" width="13.500" height="12.500" viewBox="0 0 13.500 12.500" fill="none" stroke="#1d2444" stroke-width="1" stroke-linecap="round" stroke-linejoin="round"><path d="M3.700 1.200v10.100" stroke="#7d88a3" stroke-width="1.600"/><path d="M1.200 3.300L3.700.8l2.500 2.500M1.200 9.200l2.500 2.500 2.500-2.500"/><path d="M8.200 4h5M8.200 6.200h5M8.200 8.400h5" stroke-width=".9" stroke-linecap="butt" stroke="#39425f"/></svg>
<div class="th fit" style="--x:408.25;--w:138.25;font-weight:normal;-webkit-text-stroke:.32px #171d3f;--c:1;left:407.65px;letter-spacing:0.254px">Date Condition Column</div>
<svg class="abs" style="left:557.5px;top:21px" width="12.500" height="12.500" viewBox="0 0 12.500 12.500" fill="none" stroke="#4c5876" stroke-width="1.050" stroke-linecap="round"><circle cx="5.200" cy="5.200" r="4.300"/><path d="M8.400 8.400l3.400 3.400"/></svg>
<svg class="abs" style="left:596px;top:21px" width="13.500" height="12.500" viewBox="0 0 13.500 12.500" fill="none" stroke="#1d2444" stroke-width="1" stroke-linecap="round" stroke-linejoin="round"><path d="M3.700 1.200v10.100" stroke="#7d88a3" stroke-width="1.600"/><path d="M1.200 3.300L3.700.8l2.500 2.500M1.200 9.200l2.500 2.500 2.500-2.500"/><path d="M8.200 4h5M8.200 6.200h5M8.200 8.400h5" stroke-width=".9" stroke-linecap="butt" stroke="#39425f"/></svg>
<div class="th fit" style="--x:614;--w:120;font-weight:normal;-webkit-text-stroke:.32px #171d3f;--c:1;left:613.40px;letter-spacing:0.238px">Retention Row Limit</div>
<svg class="abs" style="left:784px;top:21px" width="13.500" height="12.500" viewBox="0 0 13.500 12.500" fill="none" stroke="#1d2444" stroke-width="1" stroke-linecap="round" stroke-linejoin="round"><path d="M3.700 1.200v10.100" stroke="#7d88a3" stroke-width="1.600"/><path d="M1.200 3.300L3.700.8l2.500 2.500M1.200 9.200l2.500 2.500 2.500-2.500"/><path d="M8.200 4h5M8.200 6.200h5M8.200 8.400h5" stroke-width=".9" stroke-linecap="butt" stroke="#39425f"/></svg>
<div class="th fit" style="--x:802;--w:142;font-weight:normal;-webkit-text-stroke:.32px #171d3f;--c:1;left:801.40px;letter-spacing:0.209px">Retention Period (Days)</div>
<svg class="abs" style="left:994px;top:21px" width="13.500" height="12.500" viewBox="0 0 13.500 12.500" fill="none" stroke="#1d2444" stroke-width="1" stroke-linecap="round" stroke-linejoin="round"><path d="M3.700 1.200v10.100" stroke="#7d88a3" stroke-width="1.600"/><path d="M1.200 3.300L3.700.8l2.500 2.500M1.200 9.200l2.500 2.500 2.500-2.500"/><path d="M8.200 4h5M8.200 6.200h5M8.200 8.400h5" stroke-width=".9" stroke-linecap="butt" stroke="#39425f"/></svg>
<div class="th fit" style="--x:1012;--w:134;font-weight:normal;-webkit-text-stroke:.32px #171d3f;--c:1;left:1011.40px;letter-spacing:0.258px">Processing Batch Size</div>
<div class="th fit" style="--x:1199;--w:92.5;font-weight:normal;-webkit-text-stroke:.32px #171d3f;--c:1;left:1198.40px;letter-spacing:0.219px">Enable Archival</div>
<svg class="abs" style="left:1300px;top:21.500px" width="10.500" height="12" viewBox="0 0 10.500 12" fill="none" stroke="#4c5876" stroke-width="1" stroke-linejoin="round"><path d="M.6.700h9.300L6.400 5.400v5.600L4.100 9.500V5.400z"/></svg>
<svg class="abs" style="left:1355px;top:21px" width="13.500" height="12.500" viewBox="0 0 13.500 12.500" fill="none" stroke="#1d2444" stroke-width="1" stroke-linecap="round" stroke-linejoin="round"><path d="M3.700 1.200v10.100" stroke="#7d88a3" stroke-width="1.600"/><path d="M1.200 3.300L3.700.8l2.500 2.500M1.200 9.200l2.500 2.500 2.500-2.500"/><path d="M8.200 4h5M8.200 6.200h5M8.200 8.400h5" stroke-width=".9" stroke-linecap="butt" stroke="#39425f"/></svg>
<div class="th fit" style="--x:1373.5;--w:102.500;font-weight:normal;-webkit-text-stroke:.32px #171d3f;--c:1;left:1372.90px;letter-spacing:0.268px">Last Archived On</div></div>
<div class="row sel" style="top:55px;height:45px"><span style="left:6.5px">a_connectioninfo</span><span style="left:209.5px">5</span><span class="c3" style="left:389.750px">auditdate</span><span style="left:595.25px">0</span><span style="left:784px">7</span><span style="left:994px">1000</span><div class="eb" style="left:756px"><svg class="abs" style="left:5px;top:4.500px" width="10" height="10" viewBox="0 0 10 10" fill="none" stroke="#4c5876" stroke-width=".8" stroke-linejoin="round"><path d="M1 9l.5-2.300L7 1.200c.4-.4 1-.4 1.400 0l.4.400c.4.400.4 1 0 1.400L3.300 8.500zM6.200 2l1.800 1.800"/></svg></div><div class="eb" style="left:966px"><svg class="abs" style="left:5px;top:4.500px" width="10" height="10" viewBox="0 0 10 10" fill="none" stroke="#4c5876" stroke-width=".8" stroke-linejoin="round"><path d="M1 9l.5-2.300L7 1.200c.4-.4 1-.4 1.400 0l.4.400c.4.400.4 1 0 1.400L3.300 8.500zM6.200 2l1.800 1.800"/></svg></div><div class="eb" style="left:1167.5px"><svg class="abs" style="left:5px;top:4.500px" width="10" height="10" viewBox="0 0 10 10" fill="none" stroke="#4c5876" stroke-width=".8" stroke-linejoin="round"><path d="M1 9l.5-2.300L7 1.200c.4-.4 1-.4 1.400 0l.4.400c.4.400.4 1 0 1.400L3.300 8.500zM6.200 2l1.800 1.800"/></svg></div><div class="cb" style="left:1260px"><svg class="abs" style="left:1.500px;top:1.500px" width="10" height="9" viewBox="0 0 10 9" fill="none" stroke="#217a9b" stroke-width="1.500" stroke-linecap="round" stroke-linejoin="round"><path d="M1.200 4.800l2.600 2.600L8.800 1.500"/></svg></div><span class="dt" style="left:1355px">16-09-2025 08:36:36</span></div>
<div class="row alt" style="top:100px;height:46px"><span style="left:6.5px">a_custom_objects</span><span style="left:209.5px">0</span><span class="c3" style="left:389.750px">createdate</span><span style="left:595.25px">0</span><span style="left:784px">4</span><span style="left:994px">1000</span><div class="cb" style="left:1260px"><svg class="abs" style="left:1.500px;top:1.500px" width="10" height="9" viewBox="0 0 10 9" fill="none" stroke="#217a9b" stroke-width="1.500" stroke-linecap="round" stroke-linejoin="round"><path d="M1.200 4.800l2.600 2.600L8.800 1.500"/></svg></div></div>
<div class="row " style="top:146px;height:45px"><span style="left:6.5px">a_dataassetgroup</span><span style="left:209.5px">10</span><span class="c3" style="left:389.750px">createdate</span><span style="left:595.25px">0</span><span style="left:784px">7</span><span style="left:994px">1000</span><div class="cb" style="left:1260px"><svg class="abs" style="left:1.500px;top:1.500px" width="10" height="9" viewBox="0 0 10 9" fill="none" stroke="#217a9b" stroke-width="1.500" stroke-linecap="round" stroke-linejoin="round"><path d="M1.200 4.800l2.600 2.600L8.800 1.500"/></svg></div><span class="dt" style="left:1355px">16-09-2025 08:36:35</span></div>
<div class="row alt" style="top:191px;height:46px"><span style="left:6.5px">a_dataset</span><span style="left:209.5px">15</span><span class="c3" style="left:389.750px">createdate</span><span style="left:595.25px">0</span><span style="left:784px">5</span><span style="left:994px">1000</span><div class="cb" style="left:1260px"><svg class="abs" style="left:1.500px;top:1.500px" width="10" height="9" viewBox="0 0 10 9" fill="none" stroke="#217a9b" stroke-width="1.500" stroke-linecap="round" stroke-linejoin="round"><path d="M1.200 4.800l2.600 2.600L8.800 1.500"/></svg></div><span class="dt" style="left:1355px">16-09-2025 08:31:09</span></div>
<div class="row " style="top:237px;height:45px"><span style="left:6.5px">a_datasetassociation</span><span style="left:209.5px">327738</span><span class="c3" style="left:389.750px">lastmetasyncdate</span><span style="left:595.25px">0</span><span style="left:784px">7</span><span style="left:994px">1000</span><div class="cb" style="left:1260px"><svg class="abs" style="left:1.500px;top:1.500px" width="10" height="9" viewBox="0 0 10 9" fill="none" stroke="#217a9b" stroke-width="1.500" stroke-linecap="round" stroke-linejoin="round"><path d="M1.200 4.800l2.600 2.600L8.800 1.500"/></svg></div></div>
<div class="row alt" style="top:282px;height:45px"><span style="left:6.5px">a_dqruleobject</span><span style="left:209.5px">3159</span><span class="c3" style="left:389.750px">lastruntime</span><span style="left:595.25px">0</span><span style="left:784px">7</span><span style="left:994px">1000</span><div class="cb" style="left:1260px"><svg class="abs" style="left:1.500px;top:1.500px" width="10" height="9" viewBox="0 0 10 9" fill="none" stroke="#217a9b" stroke-width="1.500" stroke-linecap="round" stroke-linejoin="round"><path d="M1.200 4.800l2.600 2.600L8.800 1.500"/></svg></div><span class="dt" style="left:1355px">16-09-2025 08:54:00</span></div>
<div class="row " style="top:327px;height:46px"><span style="left:6.5px">a_governpolicydesc</span><span style="left:209.5px">0</span><span class="c3" style="left:389.750px">lastmoddate</span><span style="left:595.25px">0</span><span style="left:784px">7</span><span style="left:994px">1000</span><div class="cb" style="left:1260px"><svg class="abs" style="left:1.500px;top:1.500px" width="10" height="9" viewBox="0 0 10 9" fill="none" stroke="#217a9b" stroke-width="1.500" stroke-linecap="round" stroke-linejoin="round"><path d="M1.200 4.800l2.600 2.600L8.800 1.500"/></svg></div><span class="dt" style="left:1355px">16-09-2025 08:36:00</span></div>
<div class="row alt" style="top:373px;height:46px"><span style="left:6.5px">a_lineage</span><span style="left:209.5px">0</span><span class="c3" style="left:389.750px">createdate</span><span style="left:595.25px">0</span><span style="left:784px">7</span><span style="left:994px">1000</span><div class="cb" style="left:1260px"><svg class="abs" style="left:1.500px;top:1.500px" width="10" height="9" viewBox="0 0 10 9" fill="none" stroke="#217a9b" stroke-width="1.500" stroke-linecap="round" stroke-linejoin="round"><path d="M1.200 4.800l2.600 2.600L8.800 1.500"/></svg></div><span class="dt" style="left:1355px">16-09-2025 08:31:09</span></div>
<div class="abs" style="left:1472px;top:0;width:13px;height:397px;background:#f1f1f1"><svg class="abs" style="left:2.500px;top:5px" width="8" height="5" viewBox="0 0 8 5"><path d="M0 5L4 0l4 5z" fill="#c1c1c1"/></svg><div class="abs" style="left:2.500px;top:15.500px;width:7.500px;height:62px;background:#c1c1c1;border-radius:4px"></div><svg class="abs" style="left:2.500px;top:387px" width="8" height="5" viewBox="0 0 8 5"><path d="M0 0l4 5 4-5z" fill="#c1c1c1"/></svg></div>
<div class="abs" style="left:0;top:397px;width:1485px;height:12px;background:#f1f1f1"><svg class="abs" style="left:4px;top:2px" width="5" height="8" viewBox="0 0 5 8"><path d="M5 0L0 4l5 4z" fill="#c1c1c1"/></svg><div class="abs" style="left:15px;top:2.500px;width:736px;height:7px;background:#c1c1c1;border-radius:4px"></div><svg class="abs" style="left:1463px;top:2px" width="5" height="8" viewBox="0 0 5 8"><path d="M0 0l5 4-5 4z" fill="#c1c1c1"/></svg></div>
</div>
<div class="pager" id="pager">
<svg class="abs" style="left:21px;top:18.500px" width="12.600" height="10.500" viewBox="0 0 12 10" fill="none" stroke="#4a5679" stroke-width="1.300" stroke-linecap="round" stroke-linejoin="round"><path d="M5.200.8L1 5l4.200 4.200M10.800.8L6.600 5l4.200 4.200"/></svg>
<svg class="abs" style="left:39.700px;top:18.500px" width="7.350" height="10.500" viewBox="0 0 7 10" fill="none" stroke="#4a5679" stroke-width="1.300" stroke-linecap="round" stroke-linejoin="round"><path d="M5.600.8L1.400 5l4.200 4.200"/></svg>
<div class="abs" style="left:64.400px;top:14px;width:24.500px;height:19.500px;background:#217a9b;border-radius:3px;color:#fff;font-size:14px;font-weight:bold;text-align:center;line-height:19.500px">1</div>
<div class="pg" style="left:103px;color:#4a5679">2</div>
<svg class="abs" style="left:123.200px;top:18.500px" width="7.350" height="10.500" viewBox="0 0 7 10" fill="none" stroke="#151b3d" stroke-width="1.500" stroke-linecap="round" stroke-linejoin="round"><path d="M1.400.8L5.600 5 1.400 9.200"/></svg>
<svg class="abs" style="left:138.200px;top:18.500px" width="12.600" height="10.500" viewBox="0 0 12 10" fill="none" stroke="#151b3d" stroke-width="1.500" stroke-linecap="round" stroke-linejoin="round"><path d="M1.200.8L5.400 5 1.200 9.200M6.800.8L11 5 6.800 9.200"/></svg>
<div class="pg fit" style="--x:159.800;--w:88.750;-webkit-text-stroke:.3px #4a5679;--c:1;left:159.80px;letter-spacing:-0.357px">Out of 2 Pages</div>
<div class="pg fit" style="--x:1288;--w:184;white-space:pre;-webkit-text-stroke:.3px #4a5679;--c:1;left:1287.40px;letter-spacing:-0.156px">Displaying 1 to 50  (out of 58  )</div>
</div>
<div class="frame"></div>
</body>
</html>
